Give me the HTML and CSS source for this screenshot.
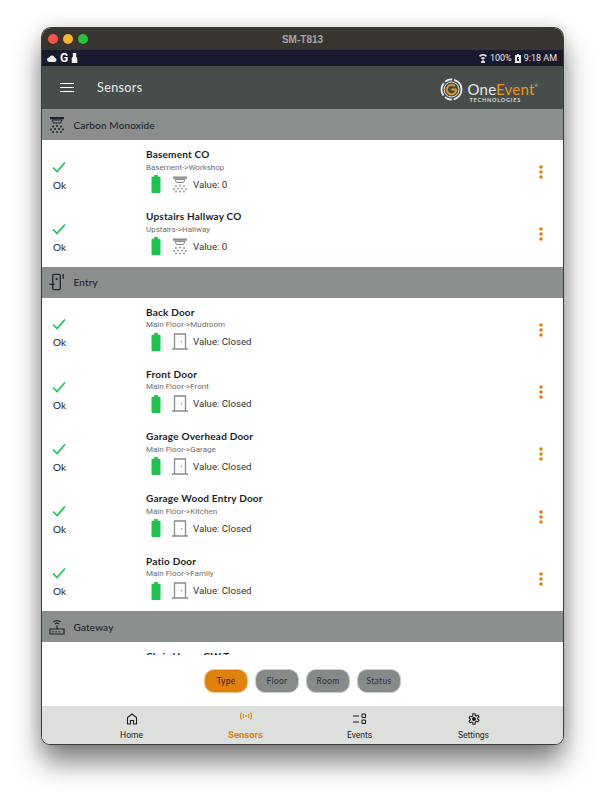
FILE: index.html
```html
<!DOCTYPE html>
<html lang="en">
<head>
    <meta charset="UTF-8">
    <title>Sensors</title>
    <link rel="stylesheet" href="styles.css">
</head>
<body>
<svg class="defs" width="0" height="0">
  <symbol id="check" viewBox="0 0 14 12"><path d="M1 6.500l4 4L13 1.500" fill="none" stroke="#1cc35a" stroke-width="1.700"/></symbol>
  <symbol id="battery" viewBox="0 0 10 20"><path d="M3 0h4v2h2a1 1 0 0 1 1 1v16a1 1 0 0 1-1 1H1a1 1 0 0 1-1-1V3a1 1 0 0 1 1-1h2z" fill="#1cc34c"/></symbol>
  <symbol id="smoke" viewBox="0 0 16 17">
    <path d="M1 .5h14v2.200H1z" fill="#8b8b8b"/><path d="M3 3.500h10L11.500 6.500h-7z" fill="none" stroke="#8b8b8b"/>
    <g fill="#8b8b8b"><circle cx="4" cy="10" r=".9"/><circle cx="8" cy="9.500" r=".9"/><circle cx="12" cy="10" r=".9"/><circle cx="2" cy="13" r=".9"/><circle cx="6" cy="12.500" r=".9"/><circle cx="10" cy="12.500" r=".9"/><circle cx="14" cy="13" r=".9"/><circle cx="4" cy="15.500" r=".9"/><circle cx="8" cy="15.500" r=".9"/><circle cx="12" cy="15.500" r=".9"/></g>
  </symbol>
  <symbol id="door" viewBox="0 0 16 17"><path d="M2.500 16V1h11v15M0 16h16" fill="none" stroke="#8b8b8b" stroke-width="1.300"/><circle cx="9.500" cy="8.500" r=".7" fill="#8b8b8b"/></symbol>
  <symbol id="dots" viewBox="0 0 4 14"><circle cx="2" cy="2" r="1.800"/><circle cx="2" cy="7" r="1.800"/><circle cx="2" cy="12" r="1.800"/></symbol>
</svg>

<div class="window">
  <div class="titlebar">
    <span class="light red"></span><span class="light yellow"></span><span class="light green"></span>
    <span class="title">SM-T813</span>
  </div>

  <div class="statusbar">
    <div class="status-left">
      <svg width="10" height="7" viewBox="0 0 10 7"><path d="M2.500 7a2.300 2.300 0 0 1-.3-4.600 3 3 0 0 1 5.600.3A2.200 2.200 0 0 1 7.800 7z" fill="#e8e8e8"/></svg>
      <span class="g">G</span>
      <svg width="7" height="10" viewBox="0 0 6 9"><path d="M1.500 0h3v3.500l1 1V9h-5V4.500l1-1z" fill="#f2f2f2"/></svg>
    </div>
    <div class="status-right">
      <svg width="8" height="9" viewBox="0 0 8 9"><path d="M0 1.500a6 6 0 0 1 8 0L7 3a4.500 4.500 0 0 0-6 0zM2 4a3 3 0 0 1 4 0L5 5.500H3zM3.300 6h1.400v1H6v2H2V7h1.300z" fill="#d8d8d8"/></svg>
      <span>100%</span>
      <svg width="6" height="9" viewBox="0 0 6 9"><path d="M2 0h2v1h2v8H0V1h2z" fill="#e8e8e8"/><path d="M2 3h2v1H3v1h1v2H2z" fill="#1a1a2e"/></svg>
      <span>9:18 AM</span>
    </div>
  </div>

  <header class="appbar">
    <div class="burger"><i></i><i></i><i></i></div>
    <h1>Sensors</h1>
    <div class="logo">
      <svg width="23" height="23" viewBox="0 0 24 24" fill="none">
        <circle cx="12" cy="12" r="10.500" stroke="#f1f1f1" stroke-width="1.800" stroke-dasharray="14 2 8 2"/>
        <circle cx="12" cy="12" r="7.800" stroke="#f1f1f1" stroke-width="1"/>
        <path d="M17 12a5 5 0 1 1-1.500-3.500M12 12h5" stroke="#e8961f" stroke-width="2"/>
      </svg>
      <div class="logo-text">
        <div class="logo-name">One<span>Event</span><sup>®</sup></div>
        <div class="logo-sub">TECHNOLOGIES</div>
      </div>
    </div>
  </header>

  <main class="list">
    <section>
      <div class="group">
        <svg width="16" height="18" viewBox="0 0 16 17"><path d="M1 .5h14v2.200H1z" fill="#1f2430"/><path d="M3 3.500h10L11.500 6.500h-7z" fill="none" stroke="#1f2430"/><g fill="#1f2430"><circle cx="4" cy="10" r="1"/><circle cx="8" cy="9.500" r="1"/><circle cx="12" cy="10" r="1"/><circle cx="2" cy="13" r="1"/><circle cx="6" cy="12.500" r="1"/><circle cx="10" cy="12.500" r="1"/><circle cx="14" cy="13" r="1"/><circle cx="4" cy="15.500" r="1"/><circle cx="8" cy="15.500" r="1"/><circle cx="12" cy="15.500" r="1"/></g></svg>
        <span>Carbon Monoxide</span>
      </div>
      <div class="row">
        <div class="state"><svg width="14" height="12"><use href="#check"/></svg><span>Ok</span></div>
        <div class="info">
          <div class="name">Basement CO</div>
          <div class="place">Basement-&gt;Workshop</div>
          <div class="reading"><svg class="bat" width="10" height="18"><use href="#battery"/></svg><svg width="16" height="17"><use href="#smoke"/></svg><span>Value: 0</span></div>
        </div>
        <svg class="more" width="4" height="14"><use href="#dots"/></svg>
      </div>
      <div class="row">
        <div class="state"><svg width="14" height="12"><use href="#check"/></svg><span>Ok</span></div>
        <div class="info">
          <div class="name">Upstairs Hallway CO</div>
          <div class="place">Upstairs-&gt;Hallway</div>
          <div class="reading"><svg class="bat" width="10" height="18"><use href="#battery"/></svg><svg width="16" height="17"><use href="#smoke"/></svg><span>Value: 0</span></div>
        </div>
        <svg class="more" width="4" height="14"><use href="#dots"/></svg>
      </div>
    </section>

    <section>
      <div class="group">
        <svg width="16" height="18" viewBox="0 0 16 19" fill="none" stroke="#1f2430" stroke-width="1.400"><rect x="3.500" y="1.500" width="8" height="16" rx="1.500"/><path d="M0 12h5.500M14.500 1v5"/><rect x="6.500" y="5" width="2" height="2.500" fill="#1f2430" stroke="none"/></svg>
        <span>Entry</span>
      </div>
      <div class="row">
        <div class="state"><svg width="14" height="12"><use href="#check"/></svg><span>Ok</span></div>
        <div class="info">
          <div class="name">Back Door</div>
          <div class="place">Main Floor-&gt;Mudroom</div>
          <div class="reading"><svg class="bat" width="10" height="18"><use href="#battery"/></svg><svg width="16" height="17"><use href="#door"/></svg><span>Value: Closed</span></div>
        </div>
        <svg class="more" width="4" height="14"><use href="#dots"/></svg>
      </div>
      <div class="row">
        <div class="state"><svg width="14" height="12"><use href="#check"/></svg><span>Ok</span></div>
        <div class="info">
          <div class="name">Front Door</div>
          <div class="place">Main Floor-&gt;Front</div>
          <div class="reading"><svg class="bat" width="10" height="18"><use href="#battery"/></svg><svg width="16" height="17"><use href="#door"/></svg><span>Value: Closed</span></div>
        </div>
        <svg class="more" width="4" height="14"><use href="#dots"/></svg>
      </div>
      <div class="row">
        <div class="state"><svg width="14" height="12"><use href="#check"/></svg><span>Ok</span></div>
        <div class="info">
          <div class="name">Garage Overhead Door</div>
          <div class="place">Main Floor-&gt;Garage</div>
          <div class="reading"><svg class="bat" width="10" height="18"><use href="#battery"/></svg><svg width="16" height="17"><use href="#door"/></svg><span>Value: Closed</span></div>
        </div>
        <svg class="more" width="4" height="14"><use href="#dots"/></svg>
      </div>
      <div class="row">
        <div class="state"><svg width="14" height="12"><use href="#check"/></svg><span>Ok</span></div>
        <div class="info">
          <div class="name">Garage Wood Entry Door</div>
          <div class="place">Main Floor-&gt;Kitchen</div>
          <div class="reading"><svg class="bat" width="10" height="18"><use href="#battery"/></svg><svg width="16" height="17"><use href="#door"/></svg><span>Value: Closed</span></div>
        </div>
        <svg class="more" width="4" height="14"><use href="#dots"/></svg>
      </div>
      <div class="row">
        <div class="state"><svg width="14" height="12"><use href="#check"/></svg><span>Ok</span></div>
        <div class="info">
          <div class="name">Patio Door</div>
          <div class="place">Main Floor-&gt;Family</div>
          <div class="reading"><svg class="bat" width="10" height="18"><use href="#battery"/></svg><svg width="16" height="17"><use href="#door"/></svg><span>Value: Closed</span></div>
        </div>
        <svg class="more" width="4" height="14"><use href="#dots"/></svg>
      </div>
    </section>

    <section>
      <div class="group">
        <svg width="16" height="16" viewBox="0 0 16 16" fill="none" stroke="#1f2430" stroke-width="1.200"><path d="M4.500 3a5 5 0 0 1 7 0M6 5a3 3 0 0 1 4 0M8 6.500V10M1 10h14v5H1z"/><path d="M3.500 12.700h1.200M6.500 12.700h1.200M9.500 12.700h1.200" stroke-width="1.400"/></svg>
        <span>Gateway</span>
      </div>
      <div class="row">
        <div class="state"></div>
        <div class="info">
          <div class="name">Chris Home GW Type</div>
        </div>
      </div>
    </section>
  </main>

  <div class="filters">
    <button class="pill active">Type</button>
    <button class="pill">Floor</button>
    <button class="pill">Room</button>
    <button class="pill">Status</button>
  </div>

  <nav class="tabs">
    <a class="tab">
      <svg width="12" height="12" viewBox="0 0 12 12" fill="none" stroke="#1c1c1c" stroke-width="1.100"><path d="M1.500 11V4.500L6 1l4.500 3.500V11h-3V7.500h-3V11z"/></svg>
      <span>Home</span>
    </a>
    <a class="tab current">
      <svg width="14" height="12" viewBox="0 0 14 12" fill="none" stroke="#e08209" stroke-width="1.100"><path d="M2.500 1.500a7 7 0 0 0 0 7M4.700 3a4 4 0 0 0 0 4M11.500 1.500a7 7 0 0 1 0 7M9.300 3a4 4 0 0 1 0 4"/><circle cx="7" cy="5" r="1" fill="#e08209" stroke="none"/></svg>
      <span>Sensors</span>
    </a>
    <a class="tab">
      <svg width="13" height="12" viewBox="0 0 13 12" fill="none" stroke="#1c1c1c" stroke-width="1.100"><path d="M0 3h6M0 9h6"/><rect x="9" y="1" width="3.500" height="3.500" rx=".8"/><rect x="9" y="7" width="3.500" height="3.500" rx=".8"/></svg>
      <span>Events</span>
    </a>
    <a class="tab">
      <svg width="12" height="12" viewBox="0 0 12 12" fill="none" stroke="#1c1c1c" stroke-width="1.100"><path d="M5 .8h2l.3 1.500 1.200.6 1.400-.6 1 1.700-1.100 1v1.200l1.100 1-1 1.700-1.400-.6-1.200.6L7 11.200H5l-.3-1.500-1.200-.6-1.400.6-1-1.700 1.100-1V5.800L1.100 4.800l1-1.700 1.400.6 1.200-.6z"/><circle cx="6" cy="6" r="1.400" fill="#1c1c1c"/></svg>
      <span>Settings</span>
    </a>
  </nav>
</div>
</body>
</html>
```

FILE: styles.css
```css
body {
  margin: 0;
  height: 800px;
  background: #fff;
  font-family: "Lato", sans-serif;
  overflow: hidden;
}

.defs {
  display: block;
  height: 0;
}

.window {
  width: 521px;
  height: 716px;
  margin: 28px 0 0 42px;
  display: flex;
  flex-direction: column;
  overflow: hidden;
  background: #fff;
  border-radius: 9px 9px 8px 8px;
  box-shadow: 0 0 0 1px #3c3c3c, 0 18px 28px rgba(0,0,0,0.5), 0 0 18px rgba(0,0,0,0.15);
}

.titlebar {
  height: 22px;
  flex: none;
  display: flex;
  align-items: center;
  gap: 5px;
  padding-left: 6px;
  position: relative;
  background: #383531;
}

.light {
  width: 10px;
  height: 10px;
  border-radius: 50%;
}
.red { background: #f4544d; }
.yellow { background: #f8b62c; }
.green { background: #27c33f; }

.title {
  position: absolute;
  left: 0;
  right: 0;
  text-align: center;
  color: #a6a6a4;
  font-family: "Liberation Sans", sans-serif;
  font-size: 10px;
  font-weight: bold;
}

.statusbar {
  height: 16px;
  flex: none;
  display: flex;
  justify-content: space-between;
  align-items: center;
  padding: 0 6px 0 5px;
  background: #1a1a2e;
  color: #e4e4e4;
  font-family: "Roboto", sans-serif;
  font-size: 9px;
}
.status-left, .status-right {
  display: flex;
  align-items: center;
  gap: 3px;
}
.g {
  font-weight: bold;
  font-size: 12px;
  color: #fff;
}

.appbar {
  height: 43px;
  flex: none;
  display: flex;
  align-items: center;
  padding: 0 25px 0 18px;
  background: #464d4a;
}
.burger {
  width: 14px;
  display: flex;
  flex-direction: column;
  gap: 2.500px;
}
.burger i {
  height: 1.500px;
  background: #fff;
}
.appbar h1 {
  margin: 0 0 0 23px;
  flex: 1;
  color: #eef0ef;
  font-size: 12.500px;
  font-weight: 400;
  letter-spacing: 0.4px;
}

.logo {
  display: flex;
  align-items: center;
  gap: 5px;
  padding-top: 4px;
}
.logo-text { margin-top: 7px; }
.logo-name {
  color: #e9e9e9;
  font-size: 15px;
  line-height: 15px;
  letter-spacing: 0.2px;
}
.logo-name span { color: #e8961f; }
.logo-name sup {
  font-size: 4px;
  vertical-align: top;
  line-height: 8px;
}
.logo-sub {
  color: #dcdcdc;
  font-size: 5.500px;
  font-weight: 700;
  letter-spacing: 0.8px;
  line-height: 7px;
  margin-left: 2px;
}

.list {
  height: 546px;
  flex: none;
  overflow: hidden;
}
.list section { padding-bottom: 2px; }

.group {
  height: 31px;
  box-sizing: border-box;
  display: flex;
  align-items: center;
  gap: 8.500px;
  padding-left: 7px;
  background: #8a8e8c;
  color: #1f2430;
  font-size: 10px;
  letter-spacing: 0.15px;
  font-weight: 500;
}

.row {
  height: 62.300px;
  display: flex;
  align-items: center;
  padding-right: 20px;
}
.state {
  width: 104px;
  flex: none;
  box-sizing: border-box;
  padding: 9px 0 0 10px;
  display: flex;
  flex-direction: column;
  align-items: flex-start;
  gap: 6px;
  color: #222;
  font-size: 10px;
}
.state span { margin-left: 1px; }

.info {
  flex: 1;
  align-self: flex-start;
  padding-top: 8px;
}
.name {
  color: #1a1d28;
  font-size: 10px;
  font-weight: 700;
  line-height: 13.500px;
  letter-spacing: 0.2px;
}
.place {
  color: #6e6e6e;
  font-family: "Roboto", sans-serif;
  font-size: 8px;
  line-height: 11px;
}
.reading {
  display: flex;
  align-items: center;
  margin-top: 2.500px;
  color: #333;
  font-family: "Roboto", sans-serif;
  font-size: 9.700px;
}
.bat { margin: 0 0 0 5px; }
.reading svg + svg { margin: 0 5px 0 11px; }

.more {
  fill: #e08209;
  margin-top: 2px;
}

.filters {
  flex: 1;
  display: flex;
  justify-content: center;
  align-items: center;
  gap: 7px;
  background: #fff;
}
.pill {
  width: 44px;
  height: 24px;
  padding: 0;
  border: 1px solid #c9cbca;
  border-radius: 10px;
  background: #868b89;
  color: #2b2f3a;
  font-family: "Lato", sans-serif;
  font-size: 8.500px;
  letter-spacing: 0.3px;
}
.pill.active {
  background: #e08209;
  border-color: #f0c48c;
  color: #2a2118;
}

.tabs {
  height: 38px;
  flex: none;
  display: grid;
  grid-template-columns: repeat(4, 114px);
  justify-content: center;
  background: #dcdfdc;
}
.tab {
  display: flex;
  flex-direction: column;
  align-items: center;
  padding-top: 7px;
  gap: 5px;
  color: #222;
  font-family: "Roboto", sans-serif;
  font-size: 8.500px;
  line-height: 10px;
}
.tab.current {
  color: #e08209;
  font-weight: 700;
  font-size: 9.500px;
  padding-top: 5px;
  gap: 7px;
}
```
